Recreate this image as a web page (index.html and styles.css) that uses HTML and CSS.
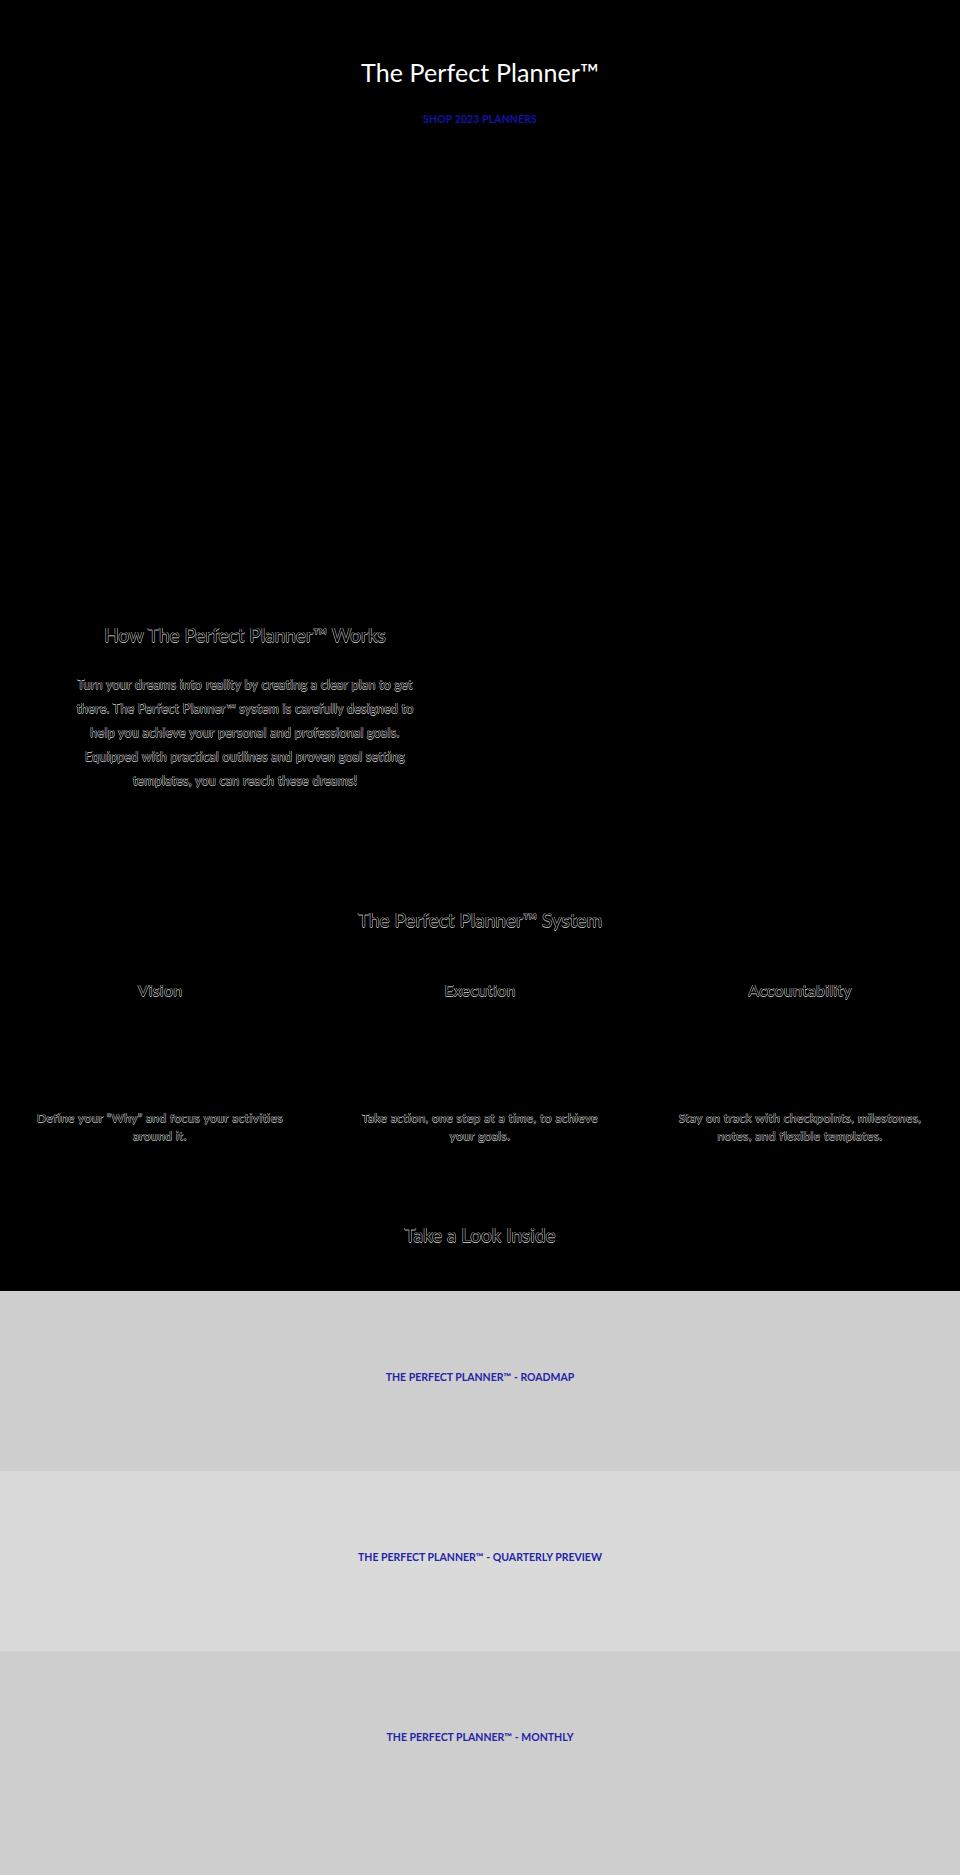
FILE: index.html
```html
<!DOCTYPE html>
<html lang="en">
<head>
<meta charset="utf-8">
<title>The Perfect Planner™</title>
<link rel="stylesheet" href="styles.css">
</head>
<body>
<header class="hero">
  <h1 class="hero-title">The Perfect Planner™</h1>
  <a class="shop-link" href="#">SHOP 2023 PLANNERS</a>
</header>

<section class="works">
  <div class="works-text">
    <h2 class="outline heading">How The Perfect Planner™ Works</h2>
    <p class="outline works-copy">Turn your dreams into reality by creating a clear plan to get there. The Perfect Planner™ system is carefully designed to help you achieve your personal and professional goals. Equipped with practical outlines and proven goal setting templates, you can reach these dreams!</p>
  </div>
  <div class="works-media"></div>
</section>

<section class="system">
  <h2 class="outline heading">The Perfect Planner™ System</h2>
  <div class="pillars">
    <div class="pillar">
      <h3 class="outline pillar-title">Vision</h3>
      <div class="pillar-media"></div>
      <p class="outline pillar-copy">Define your “Why” and focus your activities around it.</p>
    </div>
    <div class="pillar">
      <h3 class="outline pillar-title">Execution</h3>
      <div class="pillar-media"></div>
      <p class="outline pillar-copy">Take action, one step at a time, to achieve your goals.</p>
    </div>
    <div class="pillar">
      <h3 class="outline pillar-title">Accountability</h3>
      <div class="pillar-media"></div>
      <p class="outline pillar-copy">Stay on track with checkpoints, milestones, notes, and flexible templates.</p>
    </div>
  </div>
  <h2 class="outline heading look">Take a Look Inside</h2>
</section>

<section class="previews">
  <a class="band band-a" href="#"><span>THE PERFECT PLANNER™ - ROADMAP</span></a>
  <a class="band band-b" href="#"><span>THE PERFECT PLANNER™ - QUARTERLY PREVIEW</span></a>
  <a class="band band-a band-last" href="#"><span>THE PERFECT PLANNER™ - MONTHLY</span></a>
</section>
</body>
</html>
```

FILE: styles.css
```css
* { box-sizing: border-box; }

html, body {
  margin: 0;
  padding: 0;
  background: #000;
}

body {
  font-family: "Lato", "Liberation Sans", sans-serif;
  color: #fff;
}

.hero {
  height: 600px;
  padding-top: 57px;
  display: flex;
  flex-direction: column;
  align-items: center;
}

.hero-title {
  margin: 0;
  font-size: 25px;
  line-height: 31px;
  font-weight: 400;
  color: #fff;
  letter-spacing: 0.1px;
}

.shop-link {
  margin-top: 24px;
  font-size: 10.5px;
  line-height: 14px;
  font-weight: 700;
  color: #1212a8;
  text-decoration: none;
  letter-spacing: 0.1px;
}

.outline {
  color: #000;
  text-shadow:
    0.5px 0 0 #b8b8b8,
    -0.5px 0 0 #b8b8b8,
    0 0.5px 0 #b8b8b8,
    0 -0.5px 0 #b8b8b8;
}

.heading {
  margin: 0;
  font-size: 19px;
  line-height: 24px;
  font-weight: 400;
  text-align: center;
  letter-spacing: 0;
}

.works {
  display: grid;
  grid-template-columns: 490px 1fr;
  padding-top: 23px;
}

.works-text {
  display: flex;
  flex-direction: column;
  align-items: center;
}

.works-copy {
  margin: 26px 0 0;
  width: 350px;
  font-size: 12.5px;
  line-height: 24px;
  text-align: center;
  letter-spacing: 0.25px;
}

.system {
  padding-top: 115px;
  padding-bottom: 44px;
}

.pillars {
  display: grid;
  grid-template-columns: repeat(3, 1fr);
  margin-top: 48px;
}

.pillar {
  display: flex;
  flex-direction: column;
  align-items: center;
  padding: 0 34px;
}

.pillar-title {
  margin: 0;
  font-size: 16px;
  line-height: 20px;
  font-weight: 400;
  letter-spacing: 0.2px;
}

.pillar-media {
  height: 109px;
}

.pillar-copy {
  margin: 0;
  font-size: 12px;
  line-height: 18px;
  text-align: center;
  letter-spacing: 0.4px;
}

.look {
  margin-top: 78px;
}

.previews {
  display: flex;
  flex-direction: column;
}

.band {
  display: flex;
  justify-content: center;
  height: 180px;
  padding-top: 79px;
  font-size: 10.5px;
  line-height: 14px;
  font-weight: 700;
  color: #2424a8;
  text-decoration: none;
}

.band-a { background: #cecece; }
.band-b { background: #dadada; }
.band-last { height: 225px; }
```
